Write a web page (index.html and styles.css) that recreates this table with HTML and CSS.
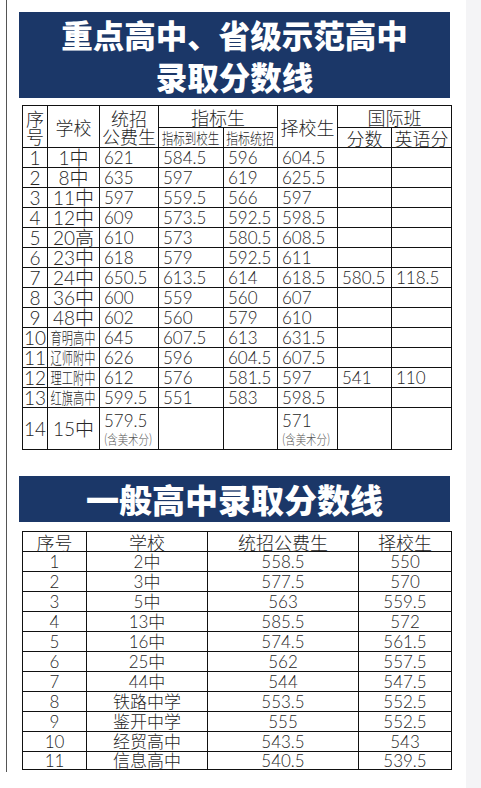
FILE: index.html
```html
<!DOCTYPE html>
<html lang="zh-CN">
<head>
<meta charset="utf-8">
<title>录取分数线</title>
<link rel="stylesheet" href="styles.css">
</head>
<body>
<div class="page">
  <div class="frame">
    <div class="title t1"><div>重点高中、省级示范高中</div><div>录取分数线</div></div>
    <div class="grid g1">
      <div class="c h ct r2"><span class="two">序<br>号</span></div>
      <div class="c h ct r2">学校</div>
      <div class="c h ct r2"><span class="two">统招<br>公费生</span></div>
      <div class="c h ct s2">指标生</div>
      <div class="c h ct r2">择校生</div>
      <div class="c h ct s2">国际班</div>
      <div class="c h ct"><span class="cz cz5">指标到校生</span></div>
      <div class="c h ct"><span class="cz cz4">指标统招</span></div>
      <div class="c h ct">分数</div>
      <div class="c h ct">英语分</div>

      <div class="c ct big">1</div><div class="c ct big">1中</div><div class="c">621</div><div class="c">584.5</div><div class="c">596</div><div class="c">604.5</div><div class="c"></div><div class="c"></div>
      <div class="c ct big">2</div><div class="c ct big">8中</div><div class="c">635</div><div class="c">597</div><div class="c">619</div><div class="c">625.5</div><div class="c"></div><div class="c"></div>
      <div class="c ct big">3</div><div class="c ct big">11中</div><div class="c">597</div><div class="c">559.5</div><div class="c">566</div><div class="c">597</div><div class="c"></div><div class="c"></div>
      <div class="c ct big">4</div><div class="c ct big">12中</div><div class="c">609</div><div class="c">573.5</div><div class="c">592.5</div><div class="c">598.5</div><div class="c"></div><div class="c"></div>
      <div class="c ct big">5</div><div class="c ct big">20高</div><div class="c">610</div><div class="c">573</div><div class="c">580.5</div><div class="c">608.5</div><div class="c"></div><div class="c"></div>
      <div class="c ct big">6</div><div class="c ct big">23中</div><div class="c">618</div><div class="c">579</div><div class="c">592.5</div><div class="c">611</div><div class="c"></div><div class="c"></div>
      <div class="c ct big">7</div><div class="c ct big">24中</div><div class="c">650.5</div><div class="c">613.5</div><div class="c">614</div><div class="c">618.5</div><div class="c">580.5</div><div class="c">118.5</div>
      <div class="c ct big">8</div><div class="c ct big">36中</div><div class="c">600</div><div class="c">559</div><div class="c">560</div><div class="c">607</div><div class="c"></div><div class="c"></div>
      <div class="c ct big">9</div><div class="c ct big">48中</div><div class="c">602</div><div class="c">560</div><div class="c">579</div><div class="c">610</div><div class="c"></div><div class="c"></div>
      <div class="c ct big">10</div><div class="c ct"><span class="cz czs">育明高中</span></div><div class="c">645</div><div class="c">607.5</div><div class="c">613</div><div class="c">631.5</div><div class="c"></div><div class="c"></div>
      <div class="c ct big">11</div><div class="c ct"><span class="cz czs">辽师附中</span></div><div class="c">626</div><div class="c">596</div><div class="c">604.5</div><div class="c">607.5</div><div class="c"></div><div class="c"></div>
      <div class="c ct big">12</div><div class="c ct"><span class="cz czs">理工附中</span></div><div class="c">612</div><div class="c">576</div><div class="c">581.5</div><div class="c">597</div><div class="c">541</div><div class="c">110</div>
      <div class="c ct big">13</div><div class="c ct"><span class="cz czs">红旗高中</span></div><div class="c">599.5</div><div class="c">551</div><div class="c">583</div><div class="c">598.5</div><div class="c"></div><div class="c"></div>
      <div class="c ct big">14</div><div class="c ct big">15中</div><div class="c"><span class="stack">579.5<span class="note">(含美术分)</span></span></div><div class="c"></div><div class="c"></div><div class="c"><span class="stack">571<span class="note">(含美术分)</span></span></div><div class="c"></div><div class="c"></div>
    </div>

    <div class="title t2">一般高中录取分数线</div>
    <div class="grid g2">
      <div class="c h ct">序号</div><div class="c h ct">学校</div><div class="c h ct">统招公费生</div><div class="c h ct">择校生</div>
      <div class="c ct">1</div><div class="c ct">2中</div><div class="c ct">558.5</div><div class="c ct">550</div>
      <div class="c ct">2</div><div class="c ct">3中</div><div class="c ct">577.5</div><div class="c ct">570</div>
      <div class="c ct">3</div><div class="c ct">5中</div><div class="c ct">563</div><div class="c ct">559.5</div>
      <div class="c ct">4</div><div class="c ct">13中</div><div class="c ct">585.5</div><div class="c ct">572</div>
      <div class="c ct">5</div><div class="c ct">16中</div><div class="c ct">574.5</div><div class="c ct">561.5</div>
      <div class="c ct">6</div><div class="c ct">25中</div><div class="c ct">562</div><div class="c ct">557.5</div>
      <div class="c ct">7</div><div class="c ct">44中</div><div class="c ct">544</div><div class="c ct">547.5</div>
      <div class="c ct">8</div><div class="c ct">铁路中学</div><div class="c ct">553.5</div><div class="c ct">552.5</div>
      <div class="c ct">9</div><div class="c ct">鉴开中学</div><div class="c ct">555</div><div class="c ct">552.5</div>
      <div class="c ct">10</div><div class="c ct">经贸高中</div><div class="c ct">543.5</div><div class="c ct">543</div>
      <div class="c ct">11</div><div class="c ct">信息高中</div><div class="c ct">540.5</div><div class="c ct">539.5</div>
    </div>
  </div>
</div>
</body>
</html>
```
FILE: styles.css
```css
* { box-sizing: border-box; }
html, body { margin: 0; padding: 0; }
body {
  background: #f4f4f6;
  font-family: "Lato", "Noto Sans CJK SC", sans-serif;
  color: #222;
}
.page {
  width: 466px;
  height: 788px;
  background: #fff;
  padding-left: 6px;
}
.frame {
  border-left: 1px solid #555;
  height: 772px;
  padding: 12px 0 0 12px;
}
.title {
  width: 431px;
  background: #1b3768;
  color: #fff;
  font-family: "Noto Sans CJK SC", sans-serif;
  font-weight: 900;
  text-align: center;
}
.t1 {
  height: 86px;
  font-size: 31.5px;
  line-height: 42px;
  padding-top: 1px;
}
.t2 {
  height: 46px;
  font-size: 33px;
  line-height: 46px;
  margin-top: 26px;
}
.grid {
  display: grid;
  margin-left: 3px;
  border-top: 1px solid #111;
  border-left: 1px solid #111;
}
.g1 {
  width: 430px;
  margin-top: 7px;
  grid-template-columns: 25px 52px 59px 65px 54px 60px 54px 60px;
  grid-template-rows: 22px 20px repeat(13, 20px) 42px;
}
.g2 {
  width: 430px;
  margin-top: 9px;
  grid-template-columns: 64px 121px 151px 93px;
  grid-template-rows: 20px repeat(10, 20px) 18px;
}
.c {
  border-right: 1px solid #111;
  border-bottom: 1px solid #111;
  display: flex;
  align-items: center;
  justify-content: flex-start;
  padding-left: 4px;
  font-size: 17px;
  font-weight: 300;
  line-height: 18px;
  white-space: nowrap;
  color: #262626;
}
.ct {
  justify-content: center;
  padding-left: 0;
  text-align: center;
}
.big { font-size: 19px; }
.h {
  font-family: "Noto Sans CJK SC", sans-serif;
  font-size: 18px;
  line-height: 18px;
}
.two {
  display: flex;
  flex-direction: column;
  align-items: center;
  gap: 2px;
}
.r2 { grid-row: span 2; }
.s2 { grid-column: span 2; }
.cz {
  display: inline-block;
  flex: none;
  transform-origin: center center;
}
.cz5 { font-size: 15px; line-height: 16px; transform: scaleX(0.77); margin: 0 -8.6px; }
.cz4 { font-size: 15px; line-height: 16px; transform: scaleX(0.8); margin: 0 -6px; }
.czs {
  font-family: "Noto Sans CJK SC", sans-serif;
  font-size: 16px;
  line-height: 17px;
  transform: scaleX(0.7);
  margin: 0 -9.6px;
}
.stack {
  display: flex;
  flex-direction: column;
  align-items: flex-start;
  line-height: 20px;
}
.note {
  display: inline-block;
  font-family: "Noto Sans CJK SC", sans-serif;
  font-size: 13px;
  line-height: 16px;
  color: #555;
  transform: scaleX(0.8);
  transform-origin: left center;
  margin-right: -12px;
}
```
